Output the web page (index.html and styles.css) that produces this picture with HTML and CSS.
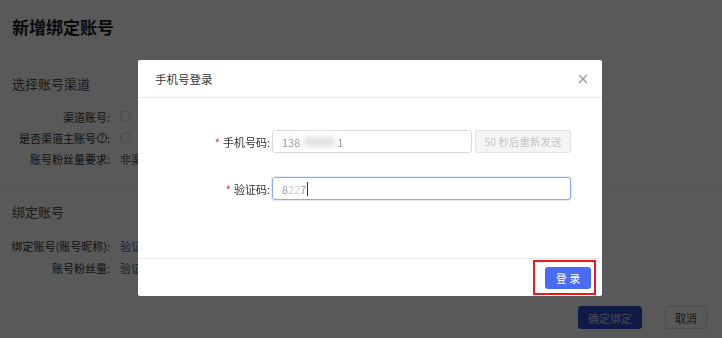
FILE: index.html
```html
<!DOCTYPE html>
<html lang="zh-CN">
<head>
    <meta charset="UTF-8">
    <meta name="viewport" content="width=device-width, initial-scale=1.0">
    <title>新增绑定账号</title>
    <link rel="stylesheet" href="styles.css">
</head>
<body>
    <div class="page">
        <header class="page-head">
            <h1>新增绑定账号</h1>
        </header>
        <section class="block block-channel">
            <h2>选择账号渠道</h2>
            <div class="field">
                <span class="field-label">渠道账号:</span>
                <span class="radio"></span>
            </div>
            <div class="field">
                <span class="field-label">是否渠道主账号<span class="help">?</span>:</span>
                <span class="radio"></span>
            </div>
            <div class="field">
                <span class="field-label">账号粉丝量要求:</span>
                <span class="field-value">非渠</span>
            </div>
        </section>
        <section class="block block-bind">
            <h2>绑定账号</h2>
            <div class="field">
                <span class="field-label">绑定账号(账号昵称):</span>
                <span class="field-value link">验证</span>
            </div>
            <div class="field">
                <span class="field-label">账号粉丝量:</span>
                <span class="field-value">验证</span>
            </div>
        </section>
        <div class="page-actions">
            <button class="btn btn-primary">确定绑定</button>
            <button class="btn">取消</button>
        </div>
    </div>

    <div class="mask">
        <div class="dialog">
            <div class="dialog-head">
                <span class="dialog-title">手机号登录</span>
                <svg class="dialog-close" width="10" height="10" viewBox="0 0 10 10">
                    <path d="M1 1L9 9M9 1L1 9" stroke="#9a9a9a" stroke-width="1.3" fill="none"/>
                </svg>
            </div>
            <div class="dialog-body">
                <div class="form-row">
                    <label class="form-label"><span class="req">*</span>手机号码:</label>
                    <div class="input input-phone">138<span class="masked"></span>1</div>
                    <button class="btn-send">50 秒后重新发送</button>
                </div>
                <div class="form-row">
                    <label class="form-label"><span class="req">*</span>验证码:</label>
                    <div class="input input-code is-focus">8<span class="blur">22</span>7<span class="caret"></span></div>
                </div>
            </div>
            <div class="dialog-foot">
                <button class="btn-login">登 录</button>
                <span class="mark"></span>
            </div>
        </div>
    </div>
</body>
</html>
```

FILE: styles.css
```css
:root {
    --primary: #4a6cf5;
    --text: #333333;
    --muted: #999999;
    --line: #e8e8e8;
    --danger: #f5222d;
}
* {
    box-sizing: border-box;
}
body {
    margin: 0;
    width: 722px;
    height: 338px;
    overflow: hidden;
    font-family: "Noto Sans CJK SC", "Noto Sans", sans-serif;
    font-size: 11px;
    color: var(--text);
    background: #ffffff;
}
button {
    font-family: inherit;
    cursor: pointer;
}

/* page under the mask */
.page-head {
    height: 53px;
    padding-left: 12px;
    border-bottom: 1px solid #f0f0f0;
}
.page-head h1 {
    margin: 0;
    font-size: 17px;
    line-height: 54px;
    color: #1a1a1a;
    font-weight: 700;
}
.block {
    border-bottom: 1px solid #f0f0f0;
}
.block h2 {
    margin: 0 0 10px;
    padding-left: 12px;
    font-size: 13px;
    font-weight: 400;
    line-height: 24px;
    color: #4a4a4a;
}
.block-channel {
    padding: 19px 0 16px;
}
.block-bind {
    padding: 14px 0 0;
    border-bottom: none;
}
.block-bind h2 {
    margin-bottom: 11px;
}
.block-bind .field {
    height: 22px;
}
.field {
    display: flex;
    align-items: center;
    height: 21px;
}
.field-label {
    width: 110px;
    text-align: right;
    color: #333333;
    white-space: nowrap;
    display: flex;
    align-items: center;
    justify-content: flex-end;
}
.help {
    display: inline-flex;
    align-items: center;
    justify-content: center;
    width: 10px;
    height: 10px;
    border: 1px solid #333333;
    border-radius: 50%;
    font-size: 8px;
    line-height: 1;
    margin-left: 1px;
}
.radio {
    width: 11px;
    height: 11px;
    margin-left: 10px;
    border: 1px solid #cccccc;
    border-radius: 50%;
}
.field-value {
    margin-left: 10px;
    color: #555555;
}
.field-value.link {
    color: #3b5bdb;
}
.page-actions {
    display: flex;
    justify-content: flex-end;
    gap: 23px;
    padding: 27px 15px 0 0;
}
.btn {
    width: 42px;
    height: 23px;
    padding: 0;
    font-size: 11px;
    white-space: nowrap;
    border: 1px solid #d9d9d9;
    background: #ffffff;
    color: #444444;
    border-radius: 3px;
}
.btn-primary {
    width: 64px;
    background: #2f4cc8;
    border-color: #2f4cc8;
    color: #c8d0f0;
}

/* modal */
.mask {
    position: fixed;
    inset: 0;
    background: rgba(0, 0, 0, 0.65);
}
.dialog {
    width: 464px;
    margin: 60px 0 0 138px;
    background: #ffffff;
    border-radius: 2px;
}
.dialog-head {
    height: 38px;
    padding: 0 14px 0 17px;
    display: flex;
    align-items: center;
    justify-content: space-between;
    border-bottom: 1px solid var(--line);
}
.dialog-title {
    font-size: 11.5px;
    color: var(--text);
}
.dialog-body {
    height: 161px;
    padding-top: 32px;
    border-bottom: 1px solid var(--line);
}
.form-row {
    display: flex;
    align-items: center;
    margin-bottom: 24px;
}
.form-label {
    width: 134px;
    padding-right: 2px;
    text-align: right;
    color: var(--text);
}
.req {
    color: var(--danger);
    margin-right: 3px;
}
.input {
    height: 23px;
    padding: 0 9px;
    display: flex;
    align-items: center;
    border: 1px solid #dcdcdc;
    border-radius: 3px;
    color: #999999;
    font-size: 11px;
}
.input-phone {
    width: 200px;
}
.input-code {
    width: 299px;
}
.input.is-focus {
    border-color: #8ea6f7;
    box-shadow: 0 0 0 1px rgba(74, 108, 245, 0.15);
}
.masked {
    display: inline-block;
    width: 31px;
    height: 10px;
    margin: 0 2px 0 4px;
    background: #e4e4e4;
    filter: blur(2px);
}
.blur {
    color: #cccccc;
    filter: blur(0.6px);
}
.caret {
    display: inline-block;
    width: 1px;
    height: 14px;
    margin-left: 1px;
    background: #333333;
}
.btn-send {
    width: 96px;
    height: 23px;
    margin-left: 3px;
    padding: 0;
    font-size: 10.5px;
    color: #c2c2c2;
    background: #f5f5f5;
    border: 1px solid #e2e2e2;
    border-radius: 3px;
}
.dialog-foot {
    position: relative;
    height: 37px;
    padding-right: 11px;
    display: flex;
    align-items: center;
    justify-content: flex-end;
}
.btn-login {
    width: 46px;
    height: 22px;
    padding: 0;
    font-size: 11px;
    color: #ffffff;
    background: var(--primary);
    border: none;
    border-radius: 3px;
}
.mark {
    position: absolute;
    left: 395px;
    top: 1px;
    width: 63px;
    height: 35px;
    border: 2px solid #f01818;
}
```
